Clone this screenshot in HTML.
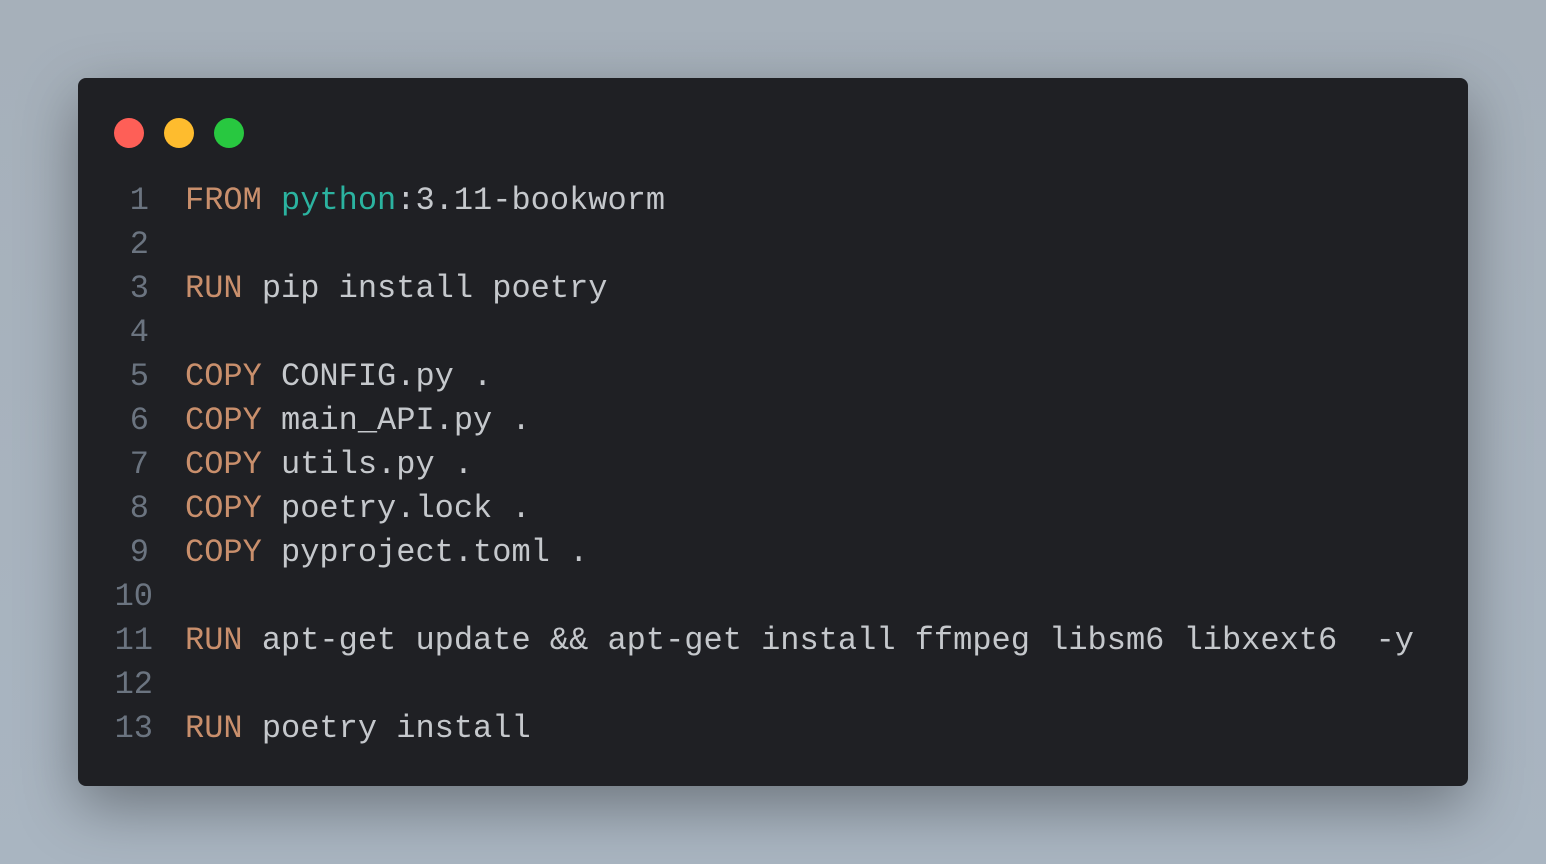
<!DOCTYPE html>
<html><head><style>
html,body{margin:0;width:1546px;height:864px;overflow:hidden;background:linear-gradient(180deg,#a6b0ba,#a9b5c1);}
.win{position:absolute;left:78px;top:78px;width:1390px;height:708px;background:#1f2024;border-radius:8px;box-shadow:0 20px 60px rgba(0,0,0,.35);}
.dot{position:absolute;top:40px;width:30px;height:30px;border-radius:50%;}
.code{position:absolute;left:0;top:101px;font-family:"Liberation Mono",monospace;font-size:32px;line-height:44px;color:#c5c8cc;white-space:pre;}
.ln{display:inline-block;width:75px;text-align:right;color:#6b7480;margin-right:32px;}
.s{width:71px;margin-right:36px;}
.k{color:#c98f6c}.t{color:#2bb3a0}
</style></head><body>
<div class="win">
<div class="dot" style="left:36px;background:#fe5f57"></div>
<div class="dot" style="left:86px;background:#febc2e"></div>
<div class="dot" style="left:136px;background:#28c840"></div>
<div class="code"><div><span class="ln s">1</span><span class="k">FROM</span> <span class="t">python</span>:3.11-bookworm</div><div><span class="ln s">2</span></div><div><span class="ln s">3</span><span class="k">RUN</span> pip install poetry</div><div><span class="ln s">4</span></div><div><span class="ln s">5</span><span class="k">COPY</span> CONFIG.py .</div><div><span class="ln s">6</span><span class="k">COPY</span> main_API.py .</div><div><span class="ln s">7</span><span class="k">COPY</span> utils.py .</div><div><span class="ln s">8</span><span class="k">COPY</span> poetry.lock .</div><div><span class="ln s">9</span><span class="k">COPY</span> pyproject.toml .</div><div><span class="ln">10</span></div><div><span class="ln">11</span><span class="k">RUN</span> apt-get update &amp;&amp; apt-get install ffmpeg libsm6 libxext6  -y</div><div><span class="ln">12</span></div><div><span class="ln">13</span><span class="k">RUN</span> poetry install</div></div>
</div>
</body></html>
